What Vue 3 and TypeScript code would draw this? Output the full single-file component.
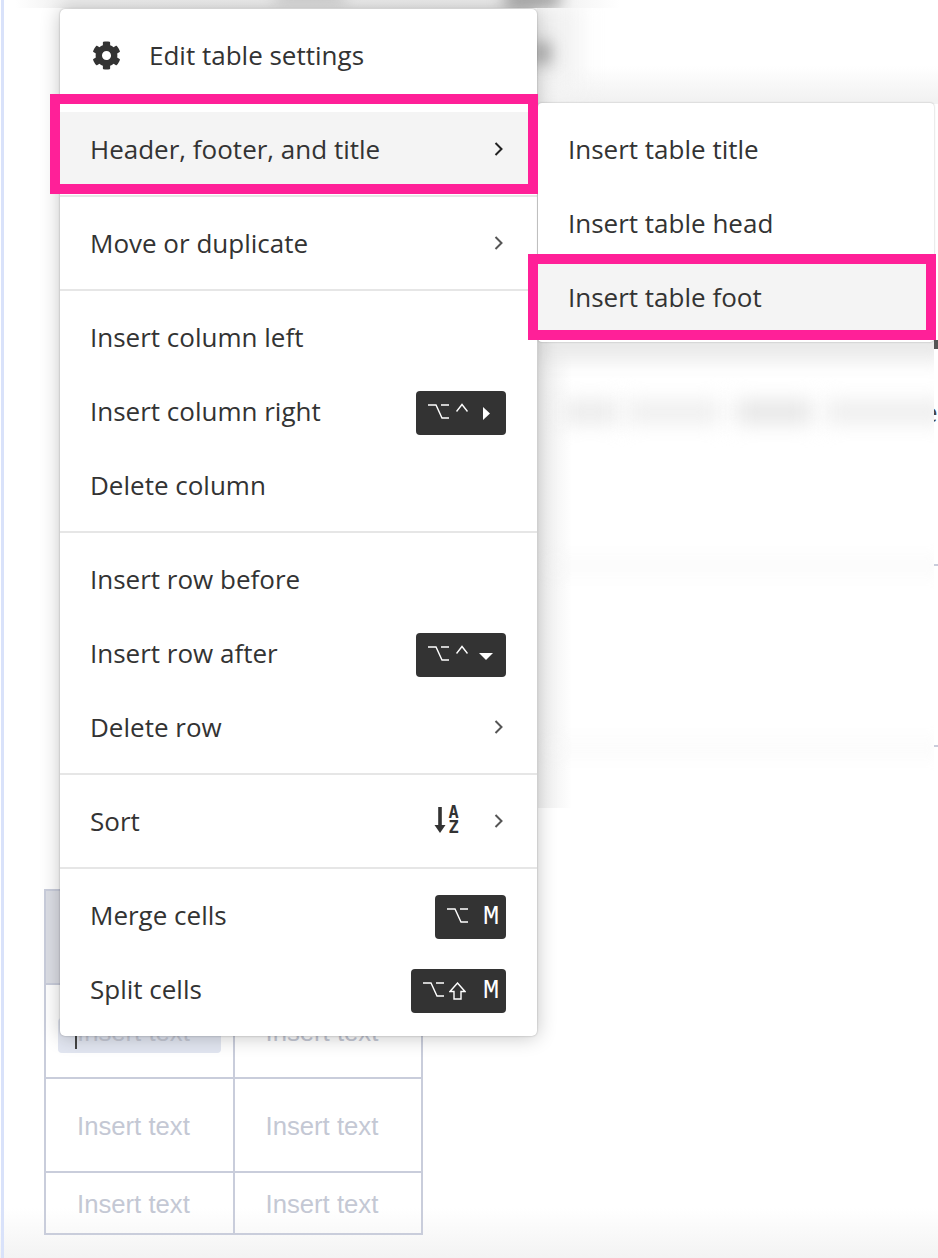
<template>
  <div class="page">
    <!-- backdrop: blurred strips above the menu -->
    <div class="top-strip">
      <span class="blob blob-a" />
      <span class="blob blob-b" />
    </div>
    <div class="top-right">
      <span class="blob blob-d" />
      <span class="blob blob-c" />
    </div>
    <div class="side-line" />

    <!-- table behind the menu -->
    <table class="doc-table">
      <tbody>
        <tr class="head-row">
          <td class="cell" />
          <td class="cell" />
        </tr>
        <tr v-for="row in tableRows" :key="row.id" :class="row.cls">
          <td class="cell">
            <span v-if="row.selected" class="selection"><i class="caret-line" />Insert text</span>
            <template v-else>Insert text</template>
          </td>
          <td class="cell">Insert text</td>
        </tr>
      </tbody>
    </table>
    <div class="bottom-fade" />

    <!-- blurred page content under the submenu -->
    <div class="blur-panel">
      <div class="blur-inner">
        <span class="blur-line line-1" />
        <span class="blur-word word-1" />
        <span class="blur-word word-2" />
        <span class="blur-word word-3" />
        <span class="blur-word word-4" />
        <span class="blur-line line-2" />
        <span class="blur-line line-3" />
      </div>
    </div>
    <div class="edge-strip">
      <span class="edge-dark edge-a" />
      <span class="edge-letter">e</span>
      <span class="edge-tick tick-a" />
      <span class="edge-tick tick-b" />
    </div>

    <!-- main context menu -->
    <div class="menu">
      <div v-for="(section, i) in sections" :key="i" class="menu-section">
        <div
          v-for="item in section"
          :key="item.label"
          class="menu-item"
          :class="{ active: item.active, 'has-icon': item.gear }"
        >
          <svg v-if="item.gear" class="gear" viewBox="0 0 512 512" width="29" height="29">
            <path
              fill="#333"
              d="M487.4 315.7l-42.6-24.6c4.3-23.2 4.3-47 0-70.2l42.6-24.6c4.9-2.8 7.1-8.6 5.5-14-11.1-35.6-30-67.8-54.7-94.6-3.8-4.1-10-5.1-14.8-2.3L380.8 110c-17.9-15.4-38.5-27.3-60.8-35.1V25.8c0-5.6-3.9-10.5-9.4-11.7-36.7-8.2-74.3-7.8-109.2 0-5.5 1.2-9.4 6.1-9.4 11.7V75c-22.2 7.9-42.8 19.8-60.8 35.1L88.7 85.5c-4.9-2.8-11-1.9-14.8 2.3-24.7 26.7-43.6 58.9-54.7 94.6-1.7 5.4.6 11.2 5.5 14L67.3 221c-4.3 23.2-4.3 47 0 70.2l-42.6 24.6c-4.9 2.8-7.1 8.6-5.5 14 11.1 35.6 30 67.8 54.7 94.6 3.8 4.1 10 5.1 14.8 2.3l42.6-24.6c17.9 15.4 38.5 27.3 60.8 35.1v49.2c0 5.6 3.9 10.5 9.4 11.7 36.7 8.2 74.3 7.8 109.2 0 5.5-1.2 9.4-6.1 9.4-11.7v-49.2c22.2-7.9 42.8-19.8 60.8-35.1l42.6 24.6c4.9 2.8 11 1.9 14.8-2.3 24.7-26.7 43.6-58.9 54.7-94.6 1.5-5.5-.7-11.3-5.6-14.1zM256 336c-44.1 0-80-35.9-80-80s35.9-80 80-80 80 35.9 80 80-35.9 80-80 80z"
            />
          </svg>
          <span class="item-label">{{ item.label }}</span>

          <span v-if="item.keys" class="kbd">
            <template v-for="key in item.keys" :key="key">
              <svg v-if="key === 'opt'" class="k-opt" width="21" height="15" viewBox="0 0 21 15">
                <path d="M0 1h8l6 13h7M13 1h8" fill="none" stroke="#fff" stroke-width="1.4" />
              </svg>
              <svg v-else-if="key === 'ctrl'" class="k-ctrl" width="12" height="9" viewBox="0 0 12 9">
                <path d="M.5 8.5 6 1.5l5.5 7" fill="none" stroke="#fff" stroke-width="1.4" />
              </svg>
              <svg v-else-if="key === 'right'" class="k-right" width="7" height="13" viewBox="0 0 7 13">
                <path d="M0 0l7 6.5L0 13z" fill="#fff" />
              </svg>
              <svg v-else-if="key === 'down'" class="k-down" width="14" height="7" viewBox="0 0 14 7">
                <path d="M0 0h14L7 7z" fill="#fff" />
              </svg>
              <svg v-else-if="key === 'shift'" class="k-shift" width="17" height="18" viewBox="0 0 17 18">
                <path d="M8.5 1 16 9.5h-4V17H5V9.5H1z" fill="none" stroke="#fff" stroke-width="1.4" />
              </svg>
              <span v-else class="k-letter">{{ key }}</span>
            </template>
          </span>

          <svg v-if="item.sort" class="sort-icon" width="26" height="30" viewBox="0 0 26 30">
            <path d="M5 1v21" stroke="#333" stroke-width="3.6" fill="none" />
            <path d="M-.5 19h11L5 27z" fill="#333" />
            <text x="18.5" y="12" text-anchor="middle" class="sort-letter">A</text>
            <text x="18.5" y="27" text-anchor="middle" class="sort-letter">Z</text>
          </svg>

          <svg
            v-if="item.arrow"
            class="chevron"
            :class="{ dark: item.active, 'after-sort': item.sort }"
            width="9"
            height="14"
            viewBox="0 0 9 14"
          >
            <path d="M1.5 1l6 6-6 6" fill="none" stroke="currentColor" stroke-width="2" />
          </svg>
        </div>
      </div>
    </div>

    <!-- submenu -->
    <div class="submenu">
      <div
        v-for="item in subItems"
        :key="item.label"
        class="menu-item sub-item"
        :class="{ active: item.active }"
      >
        <span class="item-label">{{ item.label }}</span>
      </div>
    </div>

    <!-- annotation boxes -->
    <div class="mark mark-main" />
    <div class="mark mark-sub" />
  </div>
</template>

<script setup lang="ts">
interface MenuItem {
  label: string
  gear?: boolean
  active?: boolean
  arrow?: boolean
  sort?: boolean
  keys?: string[]
}

const sections: MenuItem[][] = [
  [{ label: 'Edit table settings', gear: true }],
  [{ label: 'Header, footer, and title', arrow: true, active: true }],
  [{ label: 'Move or duplicate', arrow: true }],
  [
    { label: 'Insert column left' },
    { label: 'Insert column right', keys: ['opt', 'ctrl', 'right'] },
    { label: 'Delete column' },
  ],
  [
    { label: 'Insert row before' },
    { label: 'Insert row after', keys: ['opt', 'ctrl', 'down'] },
    { label: 'Delete row', arrow: true },
  ],
  [{ label: 'Sort', sort: true, arrow: true }],
  [
    { label: 'Merge cells', keys: ['opt', 'M'] },
    { label: 'Split cells', keys: ['opt', 'shift', 'M'] },
  ],
]

const subItems: MenuItem[] = [
  { label: 'Insert table title' },
  { label: 'Insert table head' },
  { label: 'Insert table foot', active: true },
]

const tableRows = [
  { id: 1, cls: 'row-tall', selected: true },
  { id: 2, cls: 'row-tall', selected: false },
  { id: 3, cls: 'row-short', selected: false },
]
</script>

<style>
html,
body {
  margin: 0;
  background: #fff;
}
</style>

<style scoped>
.page {
  position: relative;
  width: 938px;
  height: 1258px;
  overflow: hidden;
  background: #fff;
  font-family: 'Open Sans', 'Noto Sans', sans-serif;
  color: #333;
}

/* backdrop */
.top-strip {
  position: absolute;
  top: 0;
  left: 0;
  width: 938px;
  height: 8px;
  overflow: hidden;
  background: linear-gradient(90deg, #fff 15px, #eee 70px, #ececec 530px, #f4f4f4 570px, #fff 620px);
}

.top-right {
  position: absolute;
  left: 537px;
  top: 8px;
  width: 401px;
  height: 96px;
  overflow: hidden;
  background: linear-gradient(#fff 58px, #f2f2f2 92px);
}

.blob {
  position: absolute;
  display: block;
  background: #8c8c8c;
  filter: blur(8px);
}

.blob-a {
  left: 275px;
  top: -10px;
  width: 70px;
  height: 10px;
  opacity: 0.6;
}

.blob-b {
  left: 505px;
  top: -8px;
  width: 55px;
  height: 14px;
}

.blob-c {
  left: -4px;
  top: 34px;
  width: 18px;
  height: 22px;
  opacity: 0.75;
}

.blob-d {
  left: -8px;
  top: -8px;
  width: 50px;
  height: 90px;
  background: #f1f1f1;
  filter: blur(12px);
}

.side-line {
  position: absolute;
  left: 1px;
  top: 0;
  width: 3px;
  height: 1258px;
  background: #d9e2fa;
  z-index: 1;
}

.bottom-fade {
  position: absolute;
  left: 0;
  right: 0;
  bottom: 0;
  height: 50px;
  background: linear-gradient(rgba(243, 243, 243, 0), #f3f3f3);
}

/* table */
.doc-table {
  position: absolute;
  left: 44px;
  top: 889px;
  width: 379px;
  border-collapse: collapse;
  table-layout: fixed;
  font-family: 'Liberation Sans', Arial, sans-serif;
  font-size: 25.7px;
  color: #c4c8d4;
  z-index: 1;
}

.cell {
  border: 2px solid #c9cddb;
  padding: 2px 0 0 31px;
  text-align: left;
  background: transparent;
}

.head-row .cell {
  height: 90px;
  background: #dcdee5;
}

.row-tall .cell {
  height: 90px;
}

.row-short .cell {
  height: 58px;
}

.selection {
  position: relative;
  display: inline-block;
  margin: 0 0 -6px -19px;
  padding: 0 31px 6px 19px;
  background: #e2e6f1;
  border-radius: 4px;
}

.caret-line {
  position: absolute;
  left: 17px;
  top: 7px;
  width: 2px;
  height: 24px;
  background: #444;
}

/* blurred page area */
.blur-panel {
  position: absolute;
  left: 538px;
  top: 340px;
  width: 396px;
  height: 468px;
  overflow: hidden;
  background: #fff;
  z-index: 2;
}

.blur-inner {
  position: absolute;
  inset: 0;
  background: linear-gradient(90deg, #f2f2f2 0, #f6f6f6 18px, #fff 34px);
}

.blur-line,
.blur-word {
  position: absolute;
  display: block;
  filter: blur(10px);
}

.line-1 {
  left: -10px;
  top: -14px;
  width: 420px;
  height: 34px;
  background: #e8e8e8;
}

.line-2 {
  left: 10px;
  top: 222px;
  width: 400px;
  height: 8px;
  background: #f5f5f5;
}

.line-3 {
  left: 10px;
  top: 404px;
  width: 400px;
  height: 8px;
  background: #f6f6f6;
}

.blur-word {
  top: 60px;
  height: 24px;
  background: #ebebeb;
}

.word-1 {
  left: 24px;
  width: 56px;
}

.word-2 {
  left: 88px;
  width: 94px;
  background: #efefef;
}

.word-3 {
  left: 198px;
  width: 76px;
  background: #e6e6e6;
}

.word-4 {
  left: 288px;
  width: 120px;
  background: #eeeeee;
}

.edge-strip {
  position: absolute;
  left: 934px;
  top: 336px;
  width: 4px;
  height: 420px;
  overflow: hidden;
  font-size: 26px;
  z-index: 2;
}

.edge-dark {
  position: absolute;
  left: 0;
  top: 4px;
  width: 4px;
  height: 9px;
  background: #555;
}

.edge-letter {
  position: absolute;
  left: -11px;
  top: 58px;
  line-height: 36px;
  color: #444;
}

.edge-tick {
  position: absolute;
  left: 0;
  width: 4px;
  height: 2px;
  background: #c9cddb;
}

.tick-a {
  top: 228px;
}

.tick-b {
  top: 409px;
}

/* menus */
.menu {
  position: absolute;
  left: 60px;
  top: 9px;
  width: 477px;
  box-sizing: border-box;
  background: #fff;
  border-radius: 5px;
  box-shadow: 0 1px 20px rgba(0, 0, 0, 0.24), 0 0 2px rgba(0, 0, 0, 0.3);
  z-index: 3;
}

.menu-section {
  padding: 9px 0;
  border-top: 2px solid #e6e6e6;
}

.menu-section:first-child {
  border-top: none;
}

.menu-section:last-child {
  padding-bottom: 10px;
}

.menu-item {
  display: flex;
  align-items: center;
  height: 74px;
  padding: 0 31px 0 30px;
  font-size: 26px;
}

.menu-item.has-icon {
  padding-left: 32px;
}

.menu-item.active {
  background: #f4f4f4;
}

.item-label {
  flex: 1;
  white-space: nowrap;
}

.gear {
  margin-right: 28px;
  flex: none;
}

.chevron {
  flex: none;
  margin: 0 3px 0 18px;
  color: #555;
}

.chevron.dark {
  color: #222;
}

.chevron.after-sort {
  margin-left: 33px;
}

.sort-icon {
  flex: none;
  overflow: visible;
}

.sort-letter {
  font-family: 'DejaVu Sans Mono', monospace;
  font-size: 17px;
  font-weight: 700;
  fill: #333;
}

/* shortcut keys */
.kbd {
  flex: none;
  display: flex;
  align-items: center;
  height: 44px;
  margin-top: 4px;
  padding: 0 9px 0 12px;
  background: #333;
  border-radius: 4px;
  color: #fff;
}

.k-opt {
  flex: none;
  margin-top: -3px;
}

.k-ctrl {
  flex: none;
  margin: -11px 0 0 7px;
}

.k-right {
  flex: none;
  margin: 0 7px 0 15px;
}

.k-down {
  flex: none;
  margin: 3px 4px 0 11px;
}

.k-shift {
  flex: none;
  margin-left: 5px;
}

.k-shift + .k-letter {
  margin-left: 17px;
}

.k-letter {
  margin-left: 15px;
  width: 14px;
  font-family: 'Liberation Mono', 'DejaVu Sans Mono', monospace;
  font-size: 27px;
  line-height: 44px;
  text-align: center;
}

.submenu {
  position: absolute;
  left: 538px;
  top: 103px;
  width: 396px;
  box-sizing: border-box;
  padding: 9px 0 8px;
  background: #fff;
  border-radius: 4px;
  box-shadow: 0 0 2px rgba(0, 0, 0, 0.3);
  z-index: 3;
}

.sub-item {
  padding: 0 0 0 30px;
}

/* pink annotation rectangles */
.mark {
  position: absolute;
  box-sizing: border-box;
  border: 10px solid #ff2098;
  z-index: 4;
}

.mark-main {
  left: 50px;
  top: 94px;
  width: 488px;
  height: 100px;
}

.mark-sub {
  left: 528px;
  top: 254px;
  width: 408px;
  height: 86px;
}
</style>
